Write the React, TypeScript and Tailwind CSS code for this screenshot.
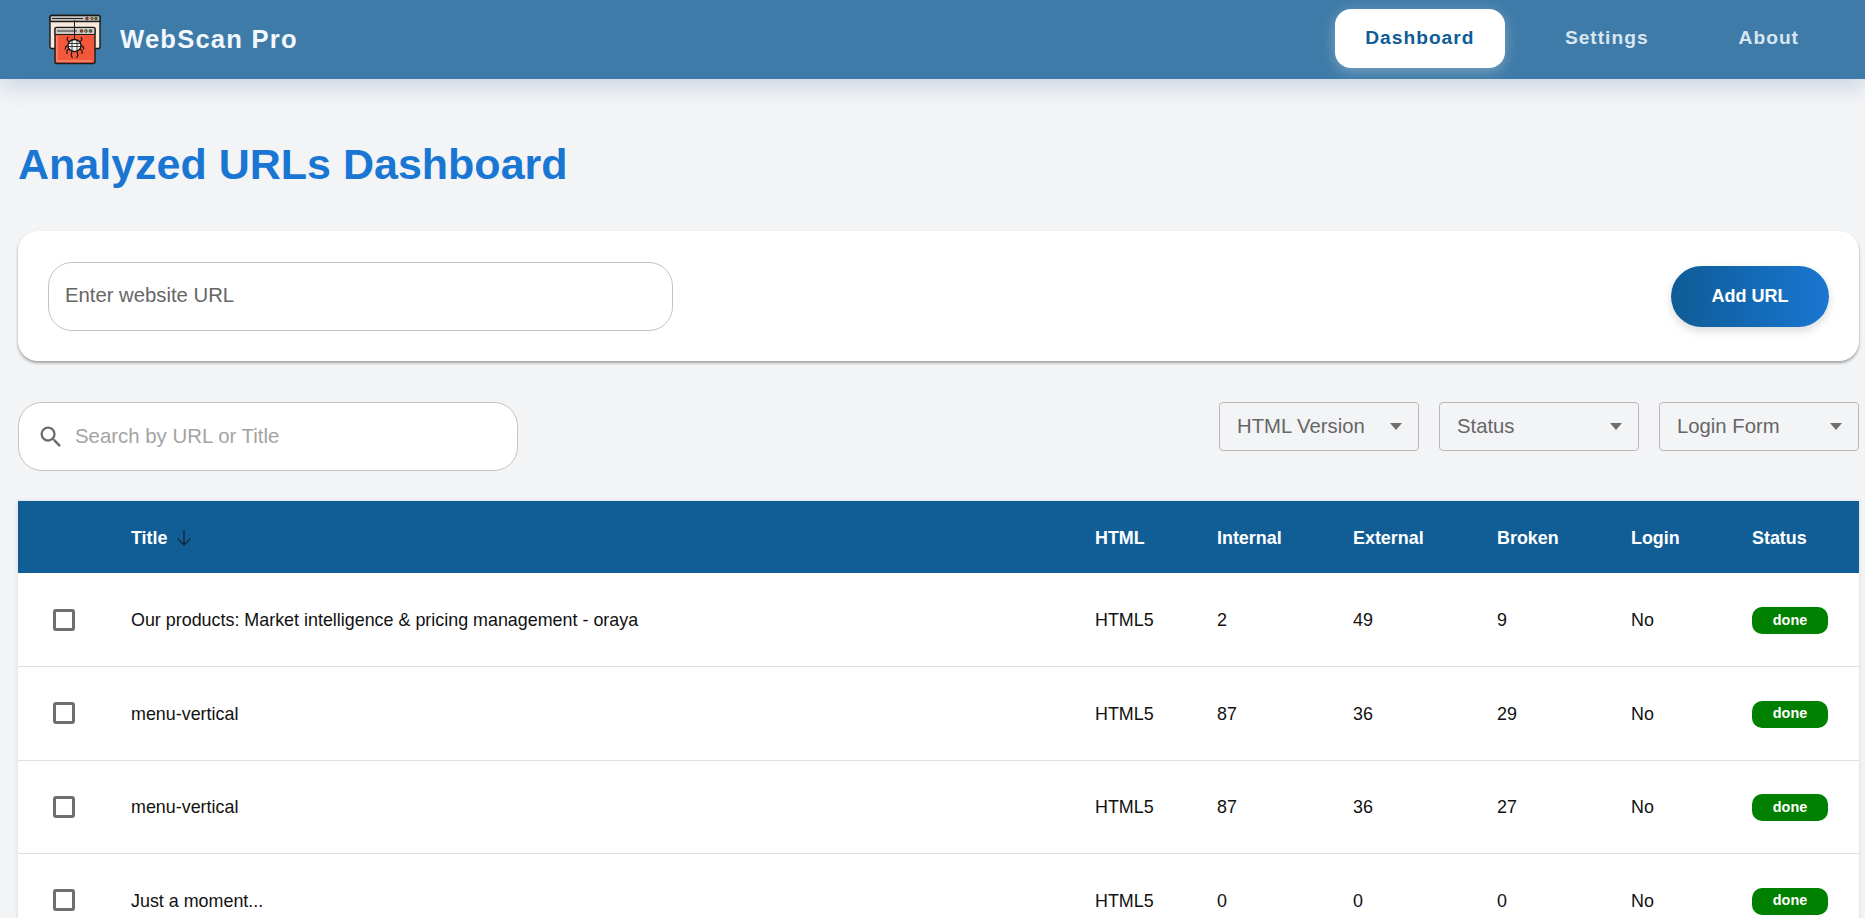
const ROWS = [
  { title: 'Our products: Market intelligence & pricing management - oraya', internal: 2, external: 49, broken: 9 },
  { title: 'menu-vertical', internal: 87, external: 36, broken: 29 },
  { title: 'menu-vertical', internal: 87, external: 36, broken: 27 },
  { title: 'Just a moment...', internal: 0, external: 0, broken: 0 },
];

const FILTERS = ['HTML Version', 'Status', 'Login Form'];

function Logo() {
  return (
    <svg width="52" height="52" viewBox="0 0 52 52" className="shrink-0">
      {/* back window */}
      <rect x="1" y="1.5" width="50" height="33" rx="1.5" fill="#f8e9dc" stroke="#1d1a1a" strokeWidth="1.4" />
      <rect x="1" y="1.5" width="50" height="6" rx="1.5" fill="#c9c4be" stroke="#1d1a1a" strokeWidth="1.4" />
      <line x1="3" y1="4.5" x2="34" y2="4.5" stroke="#222" strokeWidth="1" />
      <circle cx="38" cy="4.5" r="1.4" fill="#a8443a" stroke="#222" strokeWidth="0.6" />
      <circle cx="43" cy="4.5" r="1.4" fill="#b99a2e" stroke="#222" strokeWidth="0.6" />
      <circle cx="47" cy="4.5" r="1.4" fill="#2f8a55" stroke="#222" strokeWidth="0.6" />
      {/* front window */}
      <rect x="6" y="13.5" width="40" height="36" rx="1.5" fill="#f4583a" stroke="#1d1a1a" strokeWidth="1.4" />
      <rect x="6" y="13.5" width="40" height="7" rx="1" fill="#cfcac4" stroke="#1d1a1a" strokeWidth="1.2" />
      <line x1="8" y1="17" x2="28" y2="17" stroke="#333" strokeWidth="1" />
      <circle cx="32.5" cy="17" r="1.4" fill="#a8443a" stroke="#222" strokeWidth="0.6" />
      <circle cx="37" cy="17" r="1.4" fill="#b99a2e" stroke="#222" strokeWidth="0.6" />
      <circle cx="41.5" cy="17" r="1.4" fill="#2f8a55" stroke="#222" strokeWidth="0.6" />
      <path d="M8 47H43M8 22V47" stroke="#fbb7a6" strokeWidth="0.8" fill="none" />
      {/* spider */}
      <line x1="25.5" y1="6" x2="25.5" y2="26" stroke="#1d1a1a" strokeWidth="1" />
      <ellipse cx="25.5" cy="31.5" rx="6.5" ry="6" fill="#f5f5f5" stroke="#111" strokeWidth="1.3" />
      <path d="M20 29.5H31M20 32.5H31M23 26V37M28 26V37" stroke="#111" strokeWidth="0.8" fill="none" />
      <path
        d="M20 28L18 25.5L19 23M31 28L33 25.5L32 23M19 31.5L17 32.5L16 35.5M32 31.5L34 32.5L35 35.5M20 35L18 36.5L18 40M31 35L33 36.5L33 40M23 37.5L22 41L23.5 44M28 37.5L29 41L27.5 44"
        stroke="#111"
        strokeWidth="1.1"
        fill="none"
      />
    </svg>
  );
}

function Checkbox() {
  return <span className="block w-[22px] h-[22px] rounded-[3px] border-[3px] border-[#6e6e6e]" />;
}

export default function App() {
  return (
    <div className="h-[918px] overflow-hidden bg-[#f3f4f6] font-['Liberation_Sans',Arial,sans-serif]">
      {/* Header */}
      <header className="relative z-10 h-[79px] flex items-center justify-between bg-[#3f7ba8] pl-[49px] pr-[66px] shadow-[0_6px_24px_rgba(30,80,130,0.22)]">
        <div className="flex items-center gap-[19px]">
          <Logo />
          <span className="text-[25.6px] font-bold tracking-[1.2px] text-[#f3f8fd]">WebScan Pro</span>
        </div>
        <nav className="flex items-center pb-[2px]">
          <a className="w-[170px] h-[59px] flex items-center justify-center rounded-[16px] bg-white text-[19.2px] font-bold tracking-[1px] text-[#0f5c96] shadow-[0_3px_14px_rgba(255,255,255,0.3)]">
            Dashboard
          </a>
          <a className="ml-[60px] text-[19.2px] font-bold tracking-[1px] text-[#d9e6f2]">Settings</a>
          <a className="ml-[90px] text-[19.2px] font-bold tracking-[1px] text-[#d9e6f2]">About</a>
        </nav>
      </header>

      <main className="pl-[18px] pr-[6px]">
        <h1 className="pt-[62px] text-[43px] leading-[46px] font-bold text-[#1976d2]">Analyzed URLs Dashboard</h1>

        {/* Add URL */}
        <section className="mt-[44px] h-[130px] flex items-center justify-between rounded-[20px] bg-white pl-[30px] pr-[30px] shadow-[0_2px_3px_rgba(0,0,0,0.35)]">
          <input
            placeholder="Enter website URL"
            className="w-[625px] h-[69px] rounded-[24px] border border-[#c4c4c4] bg-white pl-[16px] pb-[2px] text-[20.3px] outline-none placeholder:text-[#666666]"
          />
          <button className="w-[158px] h-[61px] rounded-full bg-gradient-to-r from-[#0f5c96] to-[#1976d2] text-[18px] font-bold text-white shadow-[0_4px_10px_rgba(0,0,0,0.15)]">
            Add URL
          </button>
        </section>

        {/* Search + filters */}
        <section className="mt-[41px] flex items-start justify-between">
          <div className="w-[500px] h-[69px] flex items-center gap-[10px] rounded-[24px] border border-[#c4c4c4] bg-white pl-[18px]">
            <svg width="28" height="28" viewBox="0 0 24 24" fill="#6b6b6b" className="shrink-0">
              <path d="M15.5 14h-.79l-.28-.27A6.47 6.47 0 0 0 16 9.5 6.5 6.5 0 1 0 9.5 16c1.61 0 3.09-.59 4.23-1.57l.27.28v.79l5 4.99L20.49 19l-4.99-5zm-6 0C7.01 14 5 11.99 5 9.5S7.01 5 9.5 5 14 7.01 14 9.5 11.99 14 9.5 14z" />
            </svg>
            <input
              placeholder="Search by URL or Title"
              className="flex-1 min-w-0 text-[20.4px] bg-transparent outline-none placeholder:text-[#a3a3a3]"
            />
          </div>
          <div className="flex gap-[20px]">
            {FILTERS.map((f) => (
              <button
                key={f}
                className="w-[200px] h-[49px] flex items-center justify-between rounded-[4px] border border-[#b8b8b8] pl-[17px] pr-[16px] pb-[1px] text-[20.3px] text-[#666666]"
              >
                {f}
                <span className="mt-[1px] w-0 h-0 border-x-[6.5px] border-x-transparent border-t-[7px] border-t-[#6e6e6e]" />
              </button>
            ))}
          </div>
        </section>

        {/* Table */}
        <div className="mt-[30px] bg-white shadow-[0_0_4px_rgba(0,0,0,0.12)]">
          <table className="w-full table-fixed border-collapse text-left text-[17.9px] text-[#111111]">
            <colgroup>
              <col className="w-[95px]" />
              <col className="w-[964px]" />
              <col className="w-[122px]" />
              <col className="w-[136px]" />
              <col className="w-[144px]" />
              <col className="w-[134px]" />
              <col className="w-[121px]" />
              <col className="w-[125px]" />
            </colgroup>
            <thead className="bg-[#115e96] text-white">
              <tr className="h-[72px]">
                <th />
                <th className="pl-[18px] pt-[2px] font-bold">
                  <span className="inline-flex items-center gap-[8px]">
                    Title
                    <svg width="18" height="18" viewBox="0 0 18 18" fill="none" stroke="#14263a" strokeWidth="1.4">
                      <path d="M9 1.5V16M2.5 9.5L9 16L15.5 9.5" />
                    </svg>
                  </span>
                </th>
                {['HTML', 'Internal', 'External', 'Broken', 'Login', 'Status'].map((h) => (
                  <th key={h} className="pl-[18px] pt-[2px] font-bold">
                    {h}
                  </th>
                ))}
              </tr>
            </thead>
            <tbody>
              {ROWS.map((row, i) => (
                <tr key={i} className="h-[93.5px] border-b border-[#e0e0e0]">
                  <td className="pl-[35px]">
                    <Checkbox />
                  </td>
                  <td className="pl-[18px] pt-[2px]">{row.title}</td>
                  <td className="pl-[18px] pt-[2px]">HTML5</td>
                  <td className="pl-[18px] pt-[2px]">{row.internal}</td>
                  <td className="pl-[18px] pt-[2px]">{row.external}</td>
                  <td className="pl-[18px] pt-[2px]">{row.broken}</td>
                  <td className="pl-[18px] pt-[2px]">No</td>
                  <td className="pl-[18px] pt-[2px]">
                    <span className="flex items-center justify-center w-[76px] h-[27px] rounded-[10px] bg-[#008000] text-[14.4px] font-bold text-white">
                      done
                    </span>
                  </td>
                </tr>
              ))}
            </tbody>
          </table>
        </div>
      </main>
    </div>
  );
}
